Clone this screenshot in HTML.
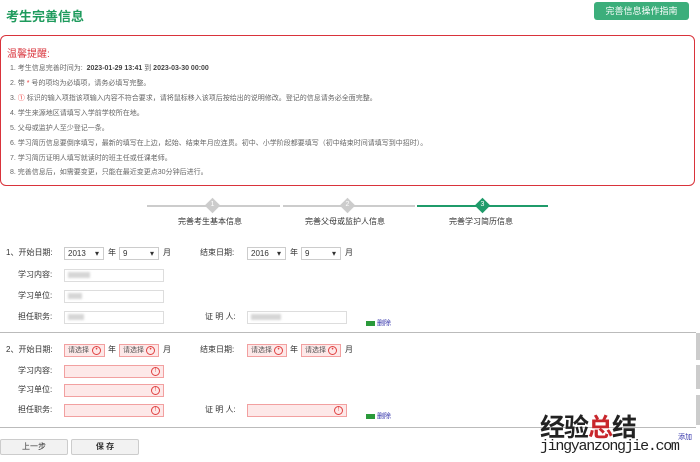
<!DOCTYPE html>
<html><head><meta charset="utf-8"><style>
*{margin:0;padding:0;box-sizing:border-box}
body{width:700px;height:462px;background:#fff;position:relative;overflow:hidden;font-family:"Liberation Sans","Noto Sans CJK SC",sans-serif;color:#333}
.a{position:absolute;white-space:nowrap}
.t{font-size:8px;line-height:10px}
.sel{position:absolute;height:13px;border:1px solid #ccc;font-size:8px;line-height:11px;padding-left:3px;background:#fff}
.sel:after{content:"▾";position:absolute;right:4px;top:0;font-size:8px}
.inp{position:absolute;height:13px;width:100px;border:1px solid #ddd;background:#fff}
.pk{position:absolute;height:13px;border:1px solid #f2a0a0;background:#fde8e8;font-size:7px;line-height:11px;padding-left:3px;color:#555}
.ex{position:absolute;right:3px;top:1px;width:9px;height:9px;border:1px solid #e04040;border-radius:50%;color:#e04040;font-size:6px;line-height:7px;text-align:center}
.li{position:absolute;left:10px;font-size:7px;color:#666;line-height:9px;white-space:nowrap}
.blur{position:absolute;height:6px;background:#bbb;opacity:.6;filter:blur(1px)}
</style></head><body>
<div class="a" style="left:6px;top:6px;font-size:13px;font-weight:bold;color:#1f9b5d">考生完善信息</div>
<div class="a" style="left:594px;top:2px;width:95px;height:18px;background:#3cae7b;border-radius:3px;color:#fff;font-size:9px;line-height:18px;text-align:center">完善信息操作指南</div>
<div class="a" style="left:0;top:35px;width:695px;height:151px;border:1.5px solid #d9333b;border-radius:6px"></div>
<div class="a" style="left:7px;top:45px;font-size:10px;color:#d9333b">温馨提醒:</div>
<div class="li" style="top:64px">1. 考生信息完善时间为:&nbsp; <b style="color:#444">2023-01-29 13:41</b> 到 <b style="color:#444">2023-03-30 00:00</b></div>
<div class="li" style="top:79px">2. 带 <span style="color:#e33">*</span> 号的项均为必填项，请务必填写完整。</div>
<div class="li" style="top:94px">3. <span style="color:#e33">①</span> 标识的输入项指该项输入内容不符合要求，请将鼠标移入该项后按给出的说明修改。登记的信息请务必全面完整。</div>
<div class="li" style="top:109px">4. 学生来源地区请填写入学前学校所在地。</div>
<div class="li" style="top:124px">5. 父母或监护人至少登记一条。</div>
<div class="li" style="top:139px">6. 学习简历信息要倒序填写，最新的填写在上边，起始、结束年月应连贯。初中、小学阶段都要填写（初中结束时间请填写到中招时）。</div>
<div class="li" style="top:154px">7. 学习简历证明人填写就读时的班主任或任课老师。</div>
<div class="li" style="top:168px">8. 完善信息后，如需要变更，只能在最近变更点30分钟后进行。</div>

<div class="a" style="left:147px;top:205px;width:133px;height:2px;background:#ccc"></div>
<div class="a" style="left:283px;top:205px;width:132px;height:2px;background:#ccc"></div>
<div class="a" style="left:417px;top:205px;width:131px;height:2px;background:#1f9b6a"></div>
<div class="a" style="left:207px;top:200px;width:11px;height:11px;background:#ccc;transform:rotate(45deg)"></div>
<div class="a" style="left:342px;top:200px;width:11px;height:11px;background:#ccc;transform:rotate(45deg)"></div>
<div class="a" style="left:477px;top:200px;width:11px;height:11px;background:#1f9b6a;transform:rotate(45deg)"></div>
<div class="a" style="left:207px;top:201px;width:11px;color:#fff;font-size:7px;text-align:center">1</div>
<div class="a" style="left:342px;top:201px;width:11px;color:#fff;font-size:7px;text-align:center">2</div>
<div class="a" style="left:477px;top:201px;width:11px;color:#fff;font-size:7px;text-align:center">3</div>
<div class="a t" style="left:178px;top:217px">完善考生基本信息</div>
<div class="a t" style="left:305px;top:217px">完善父母或监护人信息</div>
<div class="a t" style="left:449px;top:217px">完善学习简历信息</div>

<div class="a t" style="left:6px;top:248px">1、开始日期:</div>
<div class="sel" style="left:64px;top:247px;width:40px">2013</div>
<div class="a t" style="left:108px;top:248px">年</div>
<div class="sel" style="left:119px;top:247px;width:40px">9</div>
<div class="a t" style="left:163px;top:248px">月</div>
<div class="a t" style="left:200px;top:248px">结束日期:</div>
<div class="sel" style="left:247px;top:247px;width:39px">2016</div>
<div class="a t" style="left:290px;top:248px">年</div>
<div class="sel" style="left:301px;top:247px;width:40px">9</div>
<div class="a t" style="left:345px;top:248px">月</div>
<div class="a t" style="left:18px;top:270px">学习内容:</div>
<div class="inp" style="left:64px;top:269px"></div><div class="blur" style="left:68px;top:272px;width:22px"></div>
<div class="a t" style="left:18px;top:291px">学习单位:</div>
<div class="inp" style="left:64px;top:290px"></div><div class="blur" style="left:68px;top:293px;width:14px"></div>
<div class="a t" style="left:18px;top:312px">担任职务:</div>
<div class="inp" style="left:64px;top:311px"></div><div class="blur" style="left:68px;top:314px;width:16px"></div>
<div class="a t" style="left:205px;top:312px">证 明 人:</div>
<div class="inp" style="left:247px;top:311px"></div><div class="blur" style="left:251px;top:314px;width:30px"></div>
<div class="a" style="left:366px;top:321px;width:9px;height:5px;background:#2a9a3a"></div>
<div class="a" style="left:377px;top:318px;font-size:7px;color:#33a">删除</div>
<div class="a" style="left:0;top:332px;width:696px;height:1px;background:#bbb"></div>

<div class="a t" style="left:6px;top:345px">2、开始日期:</div>
<div class="pk" style="left:64px;top:344px;width:41px">请选择<span class="ex">•</span></div>
<div class="a t" style="left:108px;top:345px">年</div>
<div class="pk" style="left:119px;top:344px;width:40px">请选择<span class="ex">•</span></div>
<div class="a t" style="left:163px;top:345px">月</div>
<div class="a t" style="left:200px;top:345px">结束日期:</div>
<div class="pk" style="left:247px;top:344px;width:40px">请选择<span class="ex">•</span></div>
<div class="a t" style="left:290px;top:345px">年</div>
<div class="pk" style="left:301px;top:344px;width:40px">请选择<span class="ex">•</span></div>
<div class="a t" style="left:345px;top:345px">月</div>
<div class="a t" style="left:18px;top:366px">学习内容:</div>
<div class="pk" style="left:64px;top:365px;width:100px"><span class="ex">!</span></div>
<div class="a t" style="left:18px;top:385px">学习单位:</div>
<div class="pk" style="left:64px;top:384px;width:100px"><span class="ex">!</span></div>
<div class="a t" style="left:18px;top:405px">担任职务:</div>
<div class="pk" style="left:64px;top:404px;width:100px"><span class="ex">!</span></div>
<div class="a t" style="left:205px;top:405px">证 明 人:</div>
<div class="pk" style="left:247px;top:404px;width:100px"><span class="ex">!</span></div>
<div class="a" style="left:366px;top:414px;width:9px;height:5px;background:#2a9a3a"></div>
<div class="a" style="left:377px;top:411px;font-size:7px;color:#33a">删除</div>
<div class="a" style="left:0;top:427px;width:696px;height:1px;background:#bbb"></div>
<div class="a" style="left:696px;top:333px;width:4px;height:27px;background:#ccc"></div>
<div class="a" style="left:696px;top:365px;width:4px;height:24px;background:#ccc"></div>
<div class="a" style="left:696px;top:395px;width:4px;height:30px;background:#ccc"></div>

<div class="a" style="left:0;top:439px;width:68px;height:16px;border:1px solid #ccc;border-radius:2px;background:#f2f2f2;font-size:8px;line-height:14px;text-align:center">上一步</div>
<div class="a" style="left:71px;top:439px;width:68px;height:16px;border:1px solid #ccc;border-radius:2px;background:#f2f2f2;font-size:8px;line-height:14px;text-align:center;font-weight:bold">保 存</div>

<div class="a" style="left:540px;top:408px;font-size:25px;font-weight:bold;color:#222;letter-spacing:-1px">经验<span style="color:#c8262c">总</span>结</div>
<div class="a" style="left:540px;top:438px;font-size:15px;color:#222;font-family:'Liberation Mono',monospace;letter-spacing:-1.3px">jingyanzongjie.com</div>
<div class="a" style="left:678px;top:432px;font-size:7px;color:#33a">添加</div>
</body></html>
